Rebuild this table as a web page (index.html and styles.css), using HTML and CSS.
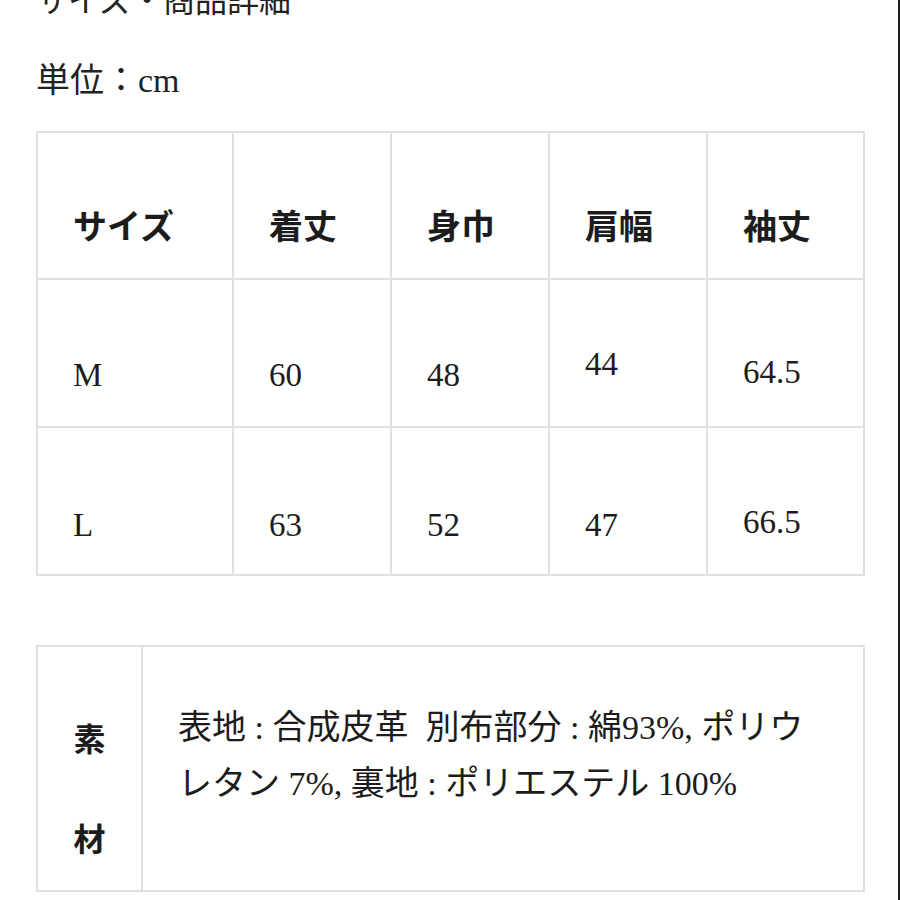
FILE: index.html
```html
<!DOCTYPE html>
<html lang="ja">
<head>
<meta charset="utf-8">
<title>サイズ・商品詳細</title>
<link rel="stylesheet" href="styles.css">
</head>
<body>
<div class="page">
  <h2 class="title">サイズ・商品詳細</h2>
  <p class="unit">単位：cm</p>
  <table class="size-table">
    <colgroup>
      <col class="c1"><col class="c2"><col class="c3"><col class="c4"><col class="c5">
    </colgroup>
    <tr class="head">
      <th>サイズ</th><th>着丈</th><th>身巾</th><th>肩幅</th><th>袖丈</th>
    </tr>
    <tr class="row-m">
      <td>M</td><td>60</td><td>48</td><td class="up11">44</td><td class="up3">64.5</td>
    </tr>
    <tr class="row-l">
      <td>L</td><td>63</td><td>52</td><td>47</td><td class="up3">66.5</td>
    </tr>
  </table>
  <table class="material-table">
    <colgroup><col class="m1"><col class="m2"></colgroup>
    <tr>
      <th class="label">素<br>材</th>
      <td class="desc">表地 : 合成皮革&nbsp; 別布部分 : 綿93%, ポリウ<br>レタン 7%, 裏地 : ポリエステル 100%</td>
    </tr>
  </table>
</div>
</body>
</html>
```
FILE: styles.css
```css
html, body {
  margin: 0;
  padding: 0;
  background: #ffffff;
}
body {
  font-family: "Liberation Serif", "Noto Sans CJK JP", serif;
  color: #1c1c1c;
}
.page {
  width: 900px;
  height: 900px;
  border-right: 2px solid #1e1e1e;
  padding-left: 36px;
  overflow: hidden;
  box-sizing: border-box;
}
.title {
  margin: -19px 0 0 0;
  font-size: 32px;
  line-height: 40px;
  font-weight: normal;
  color: #222;
}
.unit {
  margin: 40px 0 0 0;
  font-size: 34px;
  line-height: 40px;
  color: #222;
}
.size-table {
  margin-top: 30px;
  border-collapse: collapse;
  table-layout: fixed;
  width: 827px;
}
.c1 { width: 196px; }
.c2 { width: 158px; }
.c3 { width: 158px; }
.c4 { width: 158px; }
.c5 { width: 157px; }
.size-table th,
.size-table td {
  border: 2px solid #e0e0e0;
  vertical-align: top;
  text-align: left;
  padding: 0 0 0 35px;
}
.size-table th {
  height: 147px;
  box-sizing: border-box;
  padding-top: 75px;
  font-size: 34px;
  line-height: 40px;
  font-weight: bold;
}
.size-table td {
  height: 148px;
  box-sizing: border-box;
  padding-top: 75px;
  font-size: 33px;
  line-height: 40px;
}
.size-table .row-l td {
  padding-top: 77px;
}
.size-table td.up3 { padding-top: 72px; }
.size-table .row-l td.up3 { padding-top: 74px; }
.size-table td.up11 { padding-top: 64px; }

.material-table {
  margin-top: 69px;
  border-collapse: collapse;
  table-layout: fixed;
  width: 827px;
}
.m1 { width: 105px; }
.m2 { width: 722px; }
.material-table th,
.material-table td {
  border: 2px solid #e0e0e0;
  vertical-align: top;
  height: 244px;
  box-sizing: border-box;
}
.label {
  text-align: center;
  font-size: 32px;
  line-height: 100px;
  font-weight: bold;
  padding: 43px 0 0 0;
}
.desc {
  text-align: left;
  font-size: 34px;
  line-height: 56px;
  padding: 53px 0 0 35px;
  white-space: nowrap;
}
```
